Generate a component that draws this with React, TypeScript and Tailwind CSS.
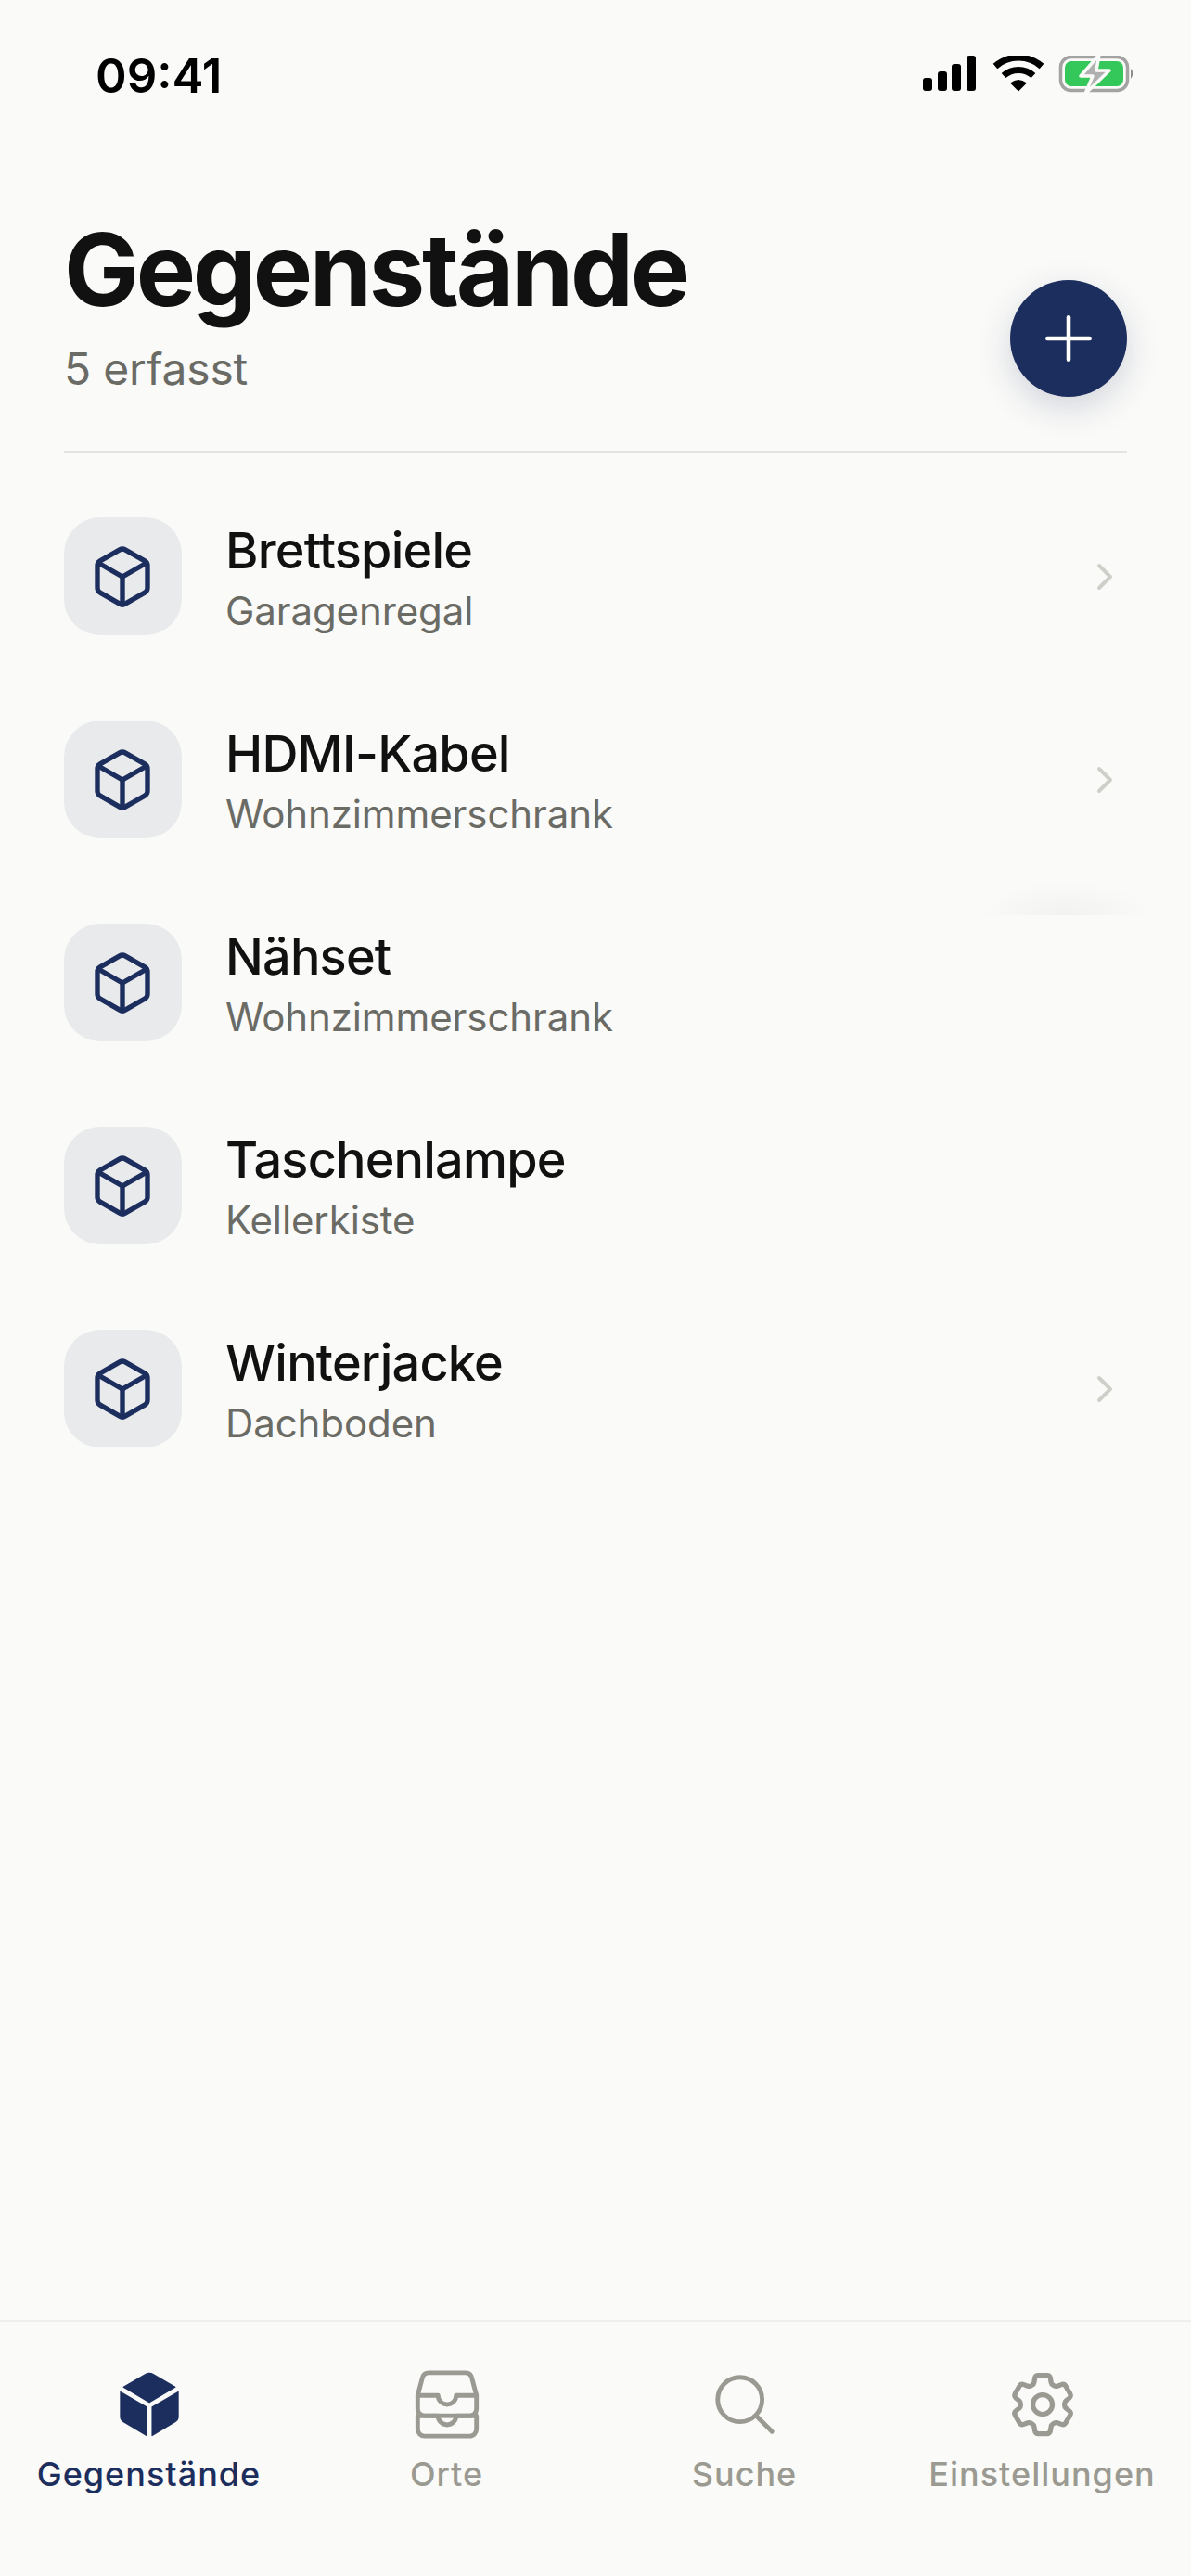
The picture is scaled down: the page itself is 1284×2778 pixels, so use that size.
import { Box, ChevronRight, Plus } from "lucide-react";
import { HiOutlineCog6Tooth } from "react-icons/hi2";
import { IoCube, IoFileTrayStackedOutline, IoSearchOutline } from "react-icons/io5";

const items = [
  { name: "Brettspiele", place: "Garagenregal", chevron: true },
  { name: "HDMI-Kabel", place: "Wohnzimmerschrank", chevron: true },
  { name: "Nähset", place: "Wohnzimmerschrank", chevron: false },
  { name: "Taschenlampe", place: "Kellerkiste", chevron: false },
  { name: "Winterjacke", place: "Dachboden", chevron: true },
];

const StatusIcons = () => (
  <div className="flex items-center pb-[8px]">
    <svg width="234" height="44" viewBox="0 0 234 44" fill="none">
      <rect x="0" y="24" width="10" height="14" rx="3" fill="#000" />
      <rect x="16" y="17" width="10" height="21" rx="3" fill="#000" />
      <rect x="31" y="9" width="10" height="29" rx="3" fill="#000" />
      <rect x="47" y="0" width="10" height="38" rx="3" fill="#000" />
      <path d="M78 11.5a38 38 0 0 1 50 0" stroke="#000" strokeWidth="7" strokeLinecap="butt" />
      <path d="M87 21.5a24 24 0 0 1 32 0" stroke="#000" strokeWidth="7" />
      <path d="M94 29.5q9-7 18 0L103 38.5Z" fill="#000" />
      <rect x="148.5" y="1.5" width="72" height="36" rx="11" stroke="#a3a3a3" strokeWidth="3.5" />
      <rect x="153" y="6" width="63" height="27" rx="7" fill="#34c759" />
      <path d="M224 14q5 5 0 11Z" fill="#8e8e8e" />
      <path d="M190 -1 L170 22H183L175 41L201 16H187Z" fill="#b0b0b0" stroke="#fafaf8" strokeWidth="3.5" strokeLinejoin="round" />
    </svg>
  </div>
);

const App = () => {
  return (
    <div className="relative flex h-[2778px] w-[1284px] flex-col overflow-hidden bg-[#fafaf8] font-['Inter',sans-serif]">
      <div className="flex h-[112px] items-end justify-between pl-[103px] pr-[55px]">
        <span className="text-[51px] leading-[60px] font-semibold text-black">09:41</span>
        <StatusIcons />
      </div>

      <div className="mx-[69px] mt-[118px] flex items-end justify-between border-b-[3px] border-[#e4e4e0] pb-[58px]">
        <div>
          <h1 className="text-[108px] leading-[122px] font-bold tracking-[-3.3px] text-[#111111]">Gegenstände</h1>
          <p className="mt-[16px] text-[48px] leading-[60px] tracking-[-0.2px] text-[#6b6b66]">5 erfasst</p>
        </div>
        <button className="flex h-[126px] w-[126px] items-center justify-center rounded-full bg-[#1c2e5e] shadow-[0_12px_36px_rgba(28,46,94,0.18)]">
          <Plus size={78} strokeWidth={1.4} className="text-white" />
        </button>
      </div>

      <div className="mx-[69px] mt-[69px] flex flex-col gap-[92px]">
        {items.map((item) => (
          <div key={item.name} className="flex h-[127px] items-center">
            <div className="flex h-[127px] w-[127px] items-center justify-center rounded-[39px] bg-[#e9eaec] pr-[2px]">
              <Box size={72} strokeWidth={1.8} className="text-[#1c2e5e]" />
            </div>
            <div className="ml-[47px] flex-1 pt-[6px]">
              <p className="text-[54px] leading-[66px] font-medium tracking-[-0.8px] text-[#111111]">{item.name}</p>
              <p className="mt-[2px] text-[42px] leading-[60px] tracking-[-0.1px] text-[#6b6b66]">{item.place}</p>
            </div>
            {item.chevron && <ChevronRight size={48} strokeWidth={2} className="text-[#cfcfca]" />}
          </div>
        ))}
      </div>

      <div className="absolute top-[950px] right-[40px] h-[37px] w-[190px] bg-[radial-gradient(ellipse_at_bottom,#f2f2f0,transparent_70%)]" />

      <nav className="mt-auto grid h-[276px] grid-cols-4 border-t-[2px] border-[#efefeb] pt-[44px]">
        <div className="flex flex-col items-center">
          <div className="flex h-[90px] items-center justify-center">
            <IoCube size={78} className="text-[#1c2e5e]" />
          </div>
          <span className="mt-[7px] text-[36px] leading-[46px] font-medium tracking-[1px] text-[#1c2e5e]">Gegenstände</span>
        </div>
        <div className="flex flex-col items-center">
          <div className="flex h-[90px] items-center justify-center">
            <IoFileTrayStackedOutline size={78} className="text-[#9a9a92]" />
          </div>
          <span className="mt-[7px] text-[36px] leading-[46px] font-medium tracking-[1px] text-[#9a9a92]">Orte</span>
        </div>
        <div className="flex flex-col items-center">
          <div className="flex h-[90px] items-center justify-center">
            <IoSearchOutline size={78} className="text-[#9a9a92]" />
          </div>
          <span className="mt-[7px] text-[36px] leading-[46px] font-medium tracking-[1px] text-[#9a9a92]">Suche</span>
        </div>
        <div className="flex flex-col items-center">
          <div className="flex h-[90px] items-center justify-center">
            <HiOutlineCog6Tooth size={84} className="text-[#9a9a92]" />
          </div>
          <span className="mt-[7px] text-[36px] leading-[46px] font-medium tracking-[1px] text-[#9a9a92]">Einstellungen</span>
        </div>
      </nav>
    </div>
  );
};

export default App;
